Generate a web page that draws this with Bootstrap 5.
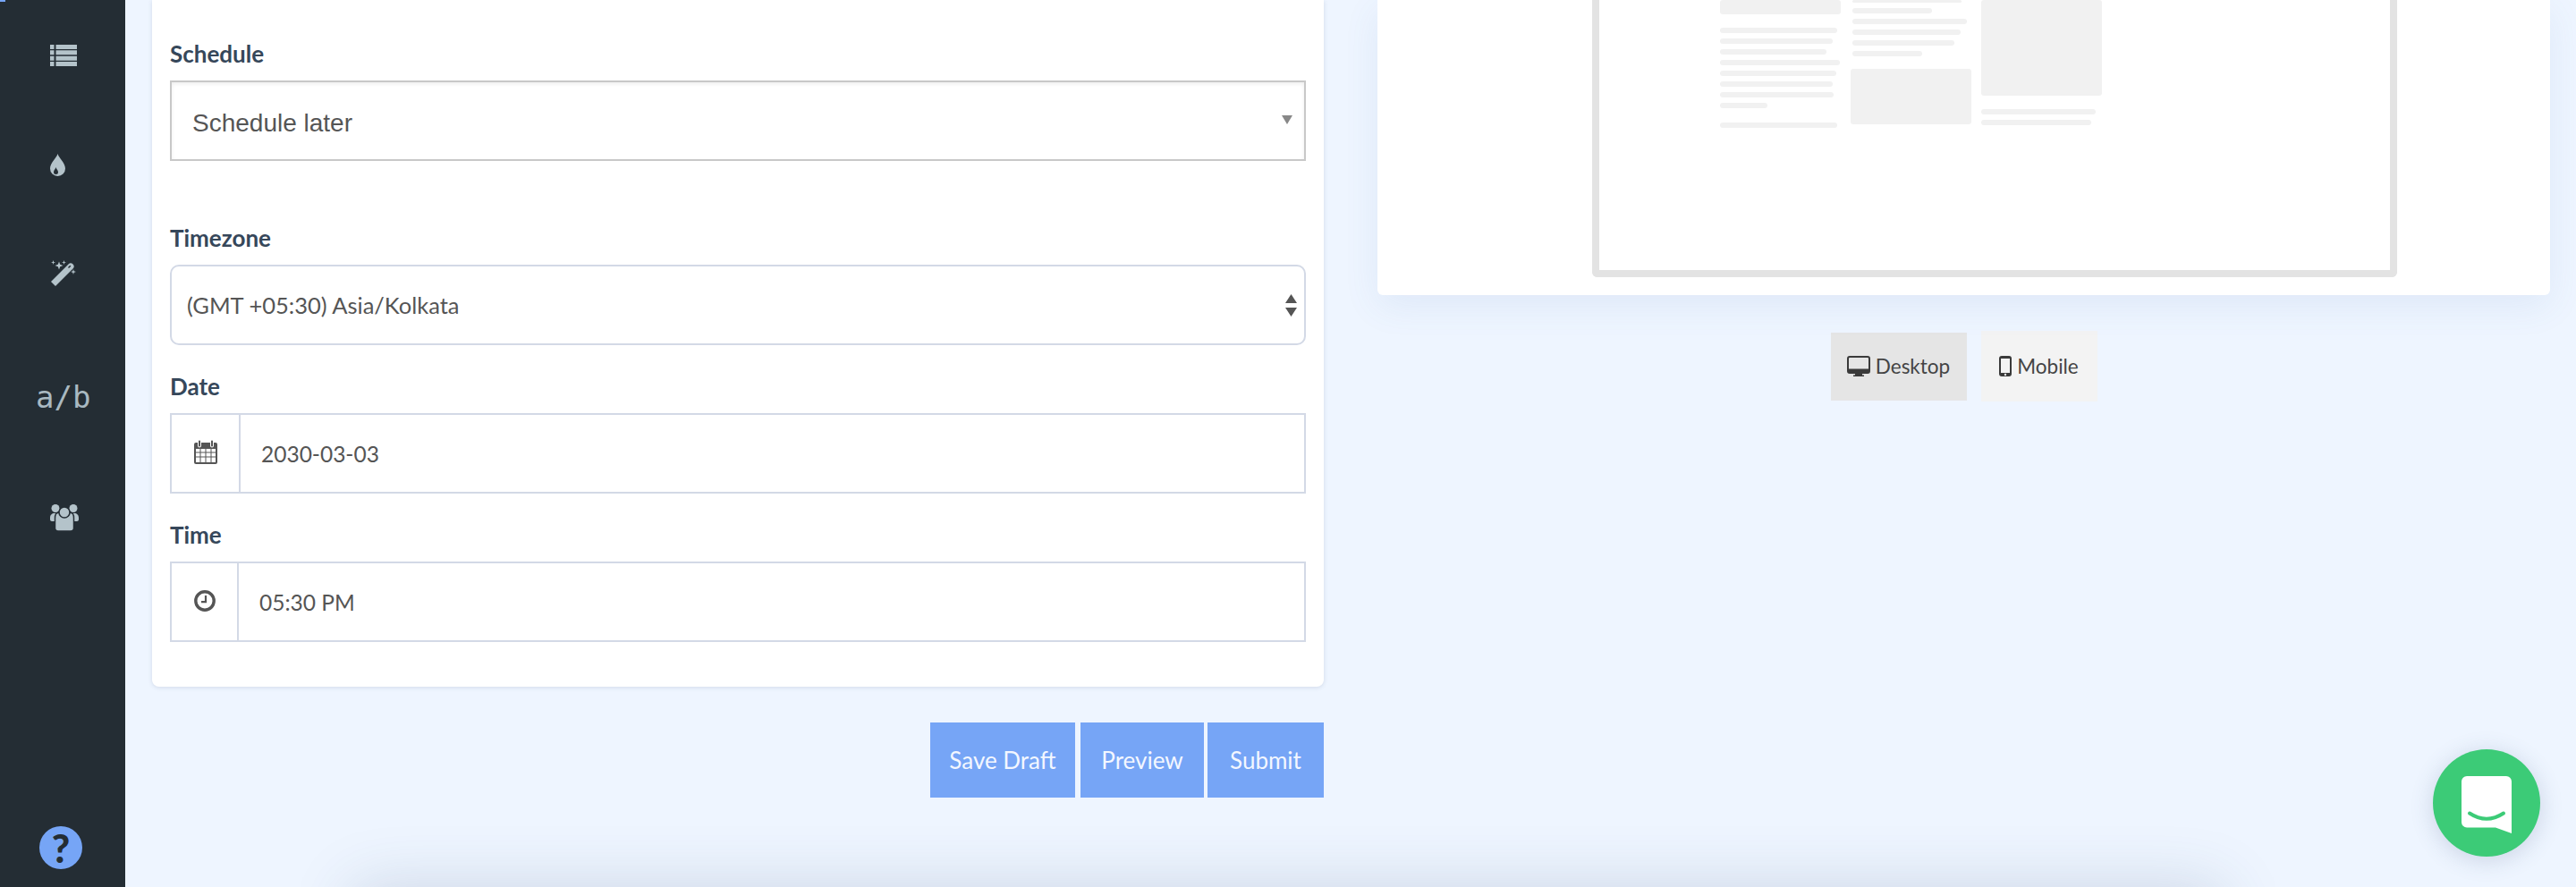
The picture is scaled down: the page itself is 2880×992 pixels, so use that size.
<!DOCTYPE html>
<html lang="en">
<head>
    <meta charset="UTF-8">
    <meta name="viewport" content="width=device-width, initial-scale=1.0">
    <title>Schedule campaign</title>
    <link href="https://cdn.jsdelivr.net/npm/bootstrap@5.3.0/dist/css/bootstrap.min.css" rel="stylesheet">
    <style>
        html, body {
            height: 100%;
        }
        body {
            background-color: #eef5ff;
            font-family: "Lato", "Noto Sans", sans-serif;
            overflow: hidden;
        }
        .side-rail {
            width: 140px;
            padding-top: 1px;
            background-color: #242d34;
            flex-shrink: 0;
            position: relative;
        }
        .rail-mark {
            position: absolute;
            top: 0;
            left: 0;
            width: 6px;
            height: 2px;
            background-color: #76a5f6;
        }
        .rail-item {
            height: 122px;
            padding-left: 56px;
        }
        .rail-ab {
            height: 154px;
            padding-left: 40px;
            font-family: "DejaVu Sans Mono", monospace;
            font-size: 34px;
            color: #a9b9c1;
        }
        .rail-users {
            height: 116px;
        }
        .rail-help {
            width: 48px;
            height: 48px;
            margin: auto 0 20px 44px;
            background-color: #76a5f6;
            color: #242d34;
            font-size: 44px;
            font-weight: 900;
            line-height: 48px;
            text-align: center;
        }
        .page-area {
            min-width: 0;
            padding-left: 30px;
        }
        .two-panels {
            display: grid;
            grid-template-columns: 1310px 1311px;
            gap: 60px;
        }
        .form-panel {
            border: 0;
            border-radius: 0 0 8px 8px;
            padding: 45px 20px 50px;
            box-shadow: 0 1px 5px rgba(60, 80, 120, .16);
        }
        .field-label {
            display: block;
            height: 30px;
            line-height: 30px;
            margin-bottom: 15px;
            font-size: 26px;
            font-weight: 700;
            color: #36475a;
        }
        .schedule-select {
            height: 90px;
            border: 2px solid #c8c8c8;
            border-radius: 0;
            padding: 6px 60px 0 23px;
            margin-bottom: 71px;
            font-family: "Liberation Sans", Arial, sans-serif;
            font-size: 28px;
            color: #555;
            box-shadow: inset 0 2px 4px rgba(0, 0, 0, .07);
            background-image: url("data:image/svg+xml,%3Csvg xmlns='http://www.w3.org/2000/svg' width='12' height='10'%3E%3Cpath d='M0 0h12L6 10z' fill='%23888'/%3E%3C/svg%3E");
            background-position: right 13px top 37px;
            background-size: 12px 10px;
        }
        .zone-select {
            height: 90px;
            border: 2px solid #d3d9e6;
            border-radius: 10px;
            padding: 0 60px 0 17px;
            margin-bottom: 31px;
            font-size: 25.5px;
            color: #555;
            background-image: url("data:image/svg+xml,%3Csvg xmlns='http://www.w3.org/2000/svg' width='13' height='25'%3E%3Cpath d='M0 10h13L6.500 0zM0 15h13L6.500 25z' fill='%23555'/%3E%3C/svg%3E");
            background-position: right 8px center;
            background-size: 13px 25px;
        }
        .field-group {
            height: 90px;
        }
        .field-group + .field-label {
            margin-top: 31px;
        }
        .field-group .input-group-text {
            background-color: #fff;
            border: 2px solid #d3d9e6;
            border-radius: 0;
            justify-content: center;
            padding: 0;
        }
        .field-group svg {
            margin-bottom: 3px;
        }
        .date-addon {
            width: 79px;
        }
        .time-addon {
            width: 77px;
        }
        .field-group .form-control {
            border: 2px solid #d3d9e6;
            border-left: 0;
            border-radius: 0;
            margin-left: 0 !important;
            padding: 2px 0 0 23px;
            font-size: 24.5px;
            color: #555;
            box-shadow: none;
        }
        .action-row {
            margin-top: 40px;
        }
        .action-btn {
            height: 84px;
            padding: 0;
            border: 0;
            border-radius: 0;
            background-color: #76a5f6;
            color: #f3f7ff;
            font-size: 26px;
        }
        .save-btn { width: 162px; margin-right: 6px; }
        .preview-btn { width: 138px; margin-right: 4px; }
        .submit-btn { width: 130px; }
        .preview-panel {
            height: 330px;
            border: 0;
            border-radius: 0 0 6px 6px;
            padding-left: 240px;
            box-shadow: 0 12px 40px rgba(70, 110, 180, .09);
        }
        .mock-frame {
            width: 900px;
            height: 310px;
            border: 8px solid #e3e3e3;
            border-top: 0;
            border-radius: 0 0 6px 6px;
            padding-left: 135px;
            gap: 11px;
            overflow: hidden;
        }
        .mock-col {
            width: 135px;
            flex-shrink: 0;
        }
        .mock-bar {
            height: 6px;
            margin-bottom: 6px;
            border-radius: 3px;
            background-color: #f1f1f1;
        }
        .mock-block {
            border-radius: 3px;
            background-color: #f1f1f1;
        }
        .mock-top { height: 16px; margin-bottom: 15px; }
        .mock-gap { margin-top: 16px; }
        .mock-mid { height: 62px; margin-top: 14px; }
        .mock-tall { height: 107px; margin-bottom: 15px; }
        .col-shift { padding-left: 2px; }
        .device-row {
            gap: 16px;
            margin-top: 40px;
        }
        .device-btn {
            padding: 0;
            border: 0;
            border-radius: 0;
            color: #444;
            font-size: 22.5px;
            gap: 6px;
        }
        .device-on {
            width: 152px;
            height: 76px;
            background-color: #e5e5e5;
        }
        .device-off {
            width: 130px;
            height: 79px;
            background-color: #f3f3f3;
        }
        .below-strip {
            width: 2090px;
            height: 100px;
            margin: 100px 0 0 225px;
            box-shadow: 0 0 70px rgba(50, 80, 110, .18);
        }
        .chat-bubble {
            position: fixed;
            left: 2720px;
            top: 838px;
            width: 120px;
            height: 120px;
            background-color: #3ccb77;
            box-shadow: 0 4px 26px rgba(60, 80, 120, .2);
        }
    </style>
</head>
<body>
    <div class="d-flex h-100">
        <div class="side-rail d-flex flex-column">
            <span class="rail-mark"></span>
            <div class="rail-item d-flex align-items-center">
                <svg width="30" height="24" viewBox="0 0 30 24" fill="#b4c3ca"><path d="M0 0h4.500v5H0zM6.500 0H30v5H6.500zM0 6.300h4.500v5H0zM6.500 6.300H30v5H6.500zM0 12.700h4.500v5H0zM6.500 12.700H30v5H6.500zM0 19h4.500v5H0zM6.500 19H30v5H6.500z"/></svg>
            </div>
            <div class="rail-item d-flex align-items-center">
                <svg width="17" height="25" viewBox="0 0 17 25"><path d="M8.500 0C10 5 17 10 17 16.500a8.500 8.500 0 0 1-17 0C0 10 7 5 8.500 0z" fill="#b4c3ca"/><path d="M6.500 15c.5 2 2.500 3.500 2.500 5.500a2.500 2.500 0 0 1-5 0C4 18.500 6 17 6.500 15z" fill="#242d34"/></svg>
            </div>
            <div class="rail-item d-flex align-items-center">
                <svg width="30" height="30" viewBox="0 0 30 30" fill="#b4c3ca"><path d="M1 25 L20.500 5.500 a3 3 0 0 1 5 5 L6 30 z" transform="translate(0 -1)"/><path d="M20.500 8.500l2.300-2.300" stroke="#242d34" stroke-width="1.500"/><path d="M10 1.500l1.200 3.300 3.300 1.200-3.300 1.200L10 10.500 8.800 7.200 5.500 6l3.300-1.200zM3.500 0l.6 1.900 1.900.6-1.900.6-.6 1.900-.6-1.900L1 2.500l1.900-.6zM15.500 0l.6 1.900 1.900.6-1.900.6-.6 1.900-.6-1.900-1.900-.6 1.900-.6zM26 10l.7 2.300 2.300.7-2.300.7-.7 2.300-.7-2.300-2.300-.7 2.300-.7z"/></svg>
            </div>
            <div class="rail-ab d-flex align-items-center">a/b</div>
            <div class="rail-item rail-users d-flex align-items-center">
                <svg width="32" height="30" viewBox="0 0 32 30" fill="#b4c3ca"><circle cx="6" cy="4.500" r="4.500"/><circle cx="26" cy="4.500" r="4.500"/><path d="M0 15c0-3 2-5 5-5h3v9H2c-1 0-2-1-2-2zM32 15c0-3-2-5-5-5h-3v9h6c1 0 2-1 2-2z"/><path d="M9 9.500h14c2 0 3.500 2.500 3.500 6v11c0 2-1.500 3.500-3.500 3.500H9c-2 0-3.500-1.500-3.500-3.500v-11c0-3.500 1.500-6 3.500-6z" stroke="#242d34" stroke-width="1.500"/><circle cx="16" cy="9" r="6" stroke="#242d34" stroke-width="1.500"/></svg>
            </div>
            <div class="rail-help rounded-circle">?</div>
        </div>

        <div class="page-area flex-grow-1">
            <div class="two-panels">
                <div>
                    <form class="card form-panel">
                        <label class="field-label" for="schedule">Schedule</label>
                        <select class="form-select schedule-select" id="schedule">
                            <option>Schedule later</option>
                        </select>
                        <label class="field-label" for="timezone">Timezone</label>
                        <select class="form-select zone-select" id="timezone">
                            <option>(GMT +05:30) Asia/Kolkata</option>
                        </select>
                        <label class="field-label" for="send-date">Date</label>
                        <div class="input-group field-group">
                            <span class="input-group-text date-addon">
                                <svg width="26" height="27" viewBox="0 0 26 27"><path d="M2 3h22a2 2 0 0 1 2 2v20a2 2 0 0 1-2 2H2a2 2 0 0 1-2-2V5a2 2 0 0 1 2-2z" fill="#555"/><path d="M2 10h4.500v3.400H2zM7.500 10h5v3.400h-5zM13.500 10h5v3.400h-5zM19.500 10H24v3.400h-4.500zM2 14.400h4.500v4H2zM7.500 14.400h5v4h-5zM13.500 14.400h5v4h-5zM19.500 14.400H24v4h-4.500zM2 19.400h4.500V25H2zM7.500 19.400h5V25h-5zM13.500 19.400h5V25h-5zM19.500 19.400H24V25h-4.500z" fill="#fff"/><path d="M6 1.500v5M20 1.500v5" stroke="#fff" stroke-width="4" stroke-linecap="round"/><path d="M6 1.500v5M20 1.500v5" stroke="#555" stroke-width="2" stroke-linecap="round"/></svg>
                            </span>
                            <input type="text" class="form-control" id="send-date" value="2030-03-03">
                        </div>
                        <label class="field-label" for="send-time">Time</label>
                        <div class="input-group field-group">
                            <span class="input-group-text time-addon">
                                <svg width="24" height="24" viewBox="0 0 24 24" fill="none" stroke="#555"><circle cx="12" cy="12" r="10.200" stroke-width="3.400"/><path d="M13 6v7.200H8" stroke-width="2.200"/></svg>
                            </span>
                            <input type="text" class="form-control" id="send-time" value="05:30 PM">
                        </div>
                    </form>
                    <div class="action-row d-flex justify-content-end">
                        <button type="button" class="btn action-btn save-btn">Save Draft</button>
                        <button type="button" class="btn action-btn preview-btn">Preview</button>
                        <button type="button" class="btn action-btn submit-btn">Submit</button>
                    </div>
                </div>

                <div>
                    <div class="card preview-panel">
                        <div class="mock-frame d-flex">
                            <div class="mock-col">
                                <div class="mock-block mock-top"></div>
                                <div class="mock-bar" style="width: 97%"></div>
                                <div class="mock-bar" style="width: 93%"></div>
                                <div class="mock-bar" style="width: 88%"></div>
                                <div class="mock-bar" style="width: 99%"></div>
                                <div class="mock-bar" style="width: 96%"></div>
                                <div class="mock-bar" style="width: 93%"></div>
                                <div class="mock-bar" style="width: 94%"></div>
                                <div class="mock-bar" style="width: 39%"></div>
                                <div class="mock-bar mock-gap" style="width: 97%"></div>
                            </div>
                            <div class="mock-col">
                                <div class="col-shift">
                                    <div class="mock-bar" style="height: 3px; width: 92%"></div>
                                    <div class="mock-bar" style="width: 67%"></div>
                                    <div class="mock-bar" style="width: 96%"></div>
                                    <div class="mock-bar" style="width: 91%"></div>
                                    <div class="mock-bar" style="width: 86%"></div>
                                    <div class="mock-bar" style="width: 59%"></div>
                                </div>
                                <div class="mock-block mock-mid"></div>
                            </div>
                            <div class="mock-col">
                                <div class="mock-block mock-tall"></div>
                                <div class="mock-bar" style="width: 95%"></div>
                                <div class="mock-bar" style="width: 91%"></div>
                            </div>
                        </div>
                    </div>
                    <div class="device-row d-flex justify-content-center align-items-center">
                        <button type="button" class="btn device-btn device-on d-flex justify-content-center align-items-center">
                            <svg width="26" height="23" viewBox="0 0 26 23"><path d="M3 0h20a3 3 0 0 1 3 3v14a3 3 0 0 1-3 3h-6v1.500h2V23H7v-1.500h2V20H3a3 3 0 0 1-3-3V3a3 3 0 0 1 3-3z" fill="#3a3a3a"/><path d="M3 2h20a1 1 0 0 1 1 1v11.500H2V3a1 1 0 0 1 1-1z" fill="#e5e5e5"/></svg>
                            Desktop
                        </button>
                        <button type="button" class="btn device-btn device-off d-flex justify-content-center align-items-center">
                            <svg width="14" height="23" viewBox="0 0 14 23"><rect width="14" height="23" rx="3" fill="#3a3a3a"/><rect x="2" y="3" width="10" height="16" fill="#f3f3f3"/><circle cx="7" cy="21" r="1.200" fill="#f3f3f3"/></svg>
                            Mobile
                        </button>
                    </div>
                </div>
            </div>
            <div class="below-strip card"></div>
        </div>
    </div>

    <div class="chat-bubble rounded-circle">
        <svg width="120" height="120" viewBox="0 0 120 120"><path d="M38 30h44a6 6 0 0 1 6 6v58l-18-6.500H38a6 6 0 0 1-6-6V36a6 6 0 0 1 6-6z" fill="#fff"/><path d="M41 71.500Q60 84 79 71.500" fill="none" stroke="#3ccb77" stroke-width="4" stroke-linecap="round"/></svg>
    </div>

    <script src="https://cdn.jsdelivr.net/npm/bootstrap@5.3.0/dist/js/bootstrap.bundle.min.js"></script>
</body>
</html>
